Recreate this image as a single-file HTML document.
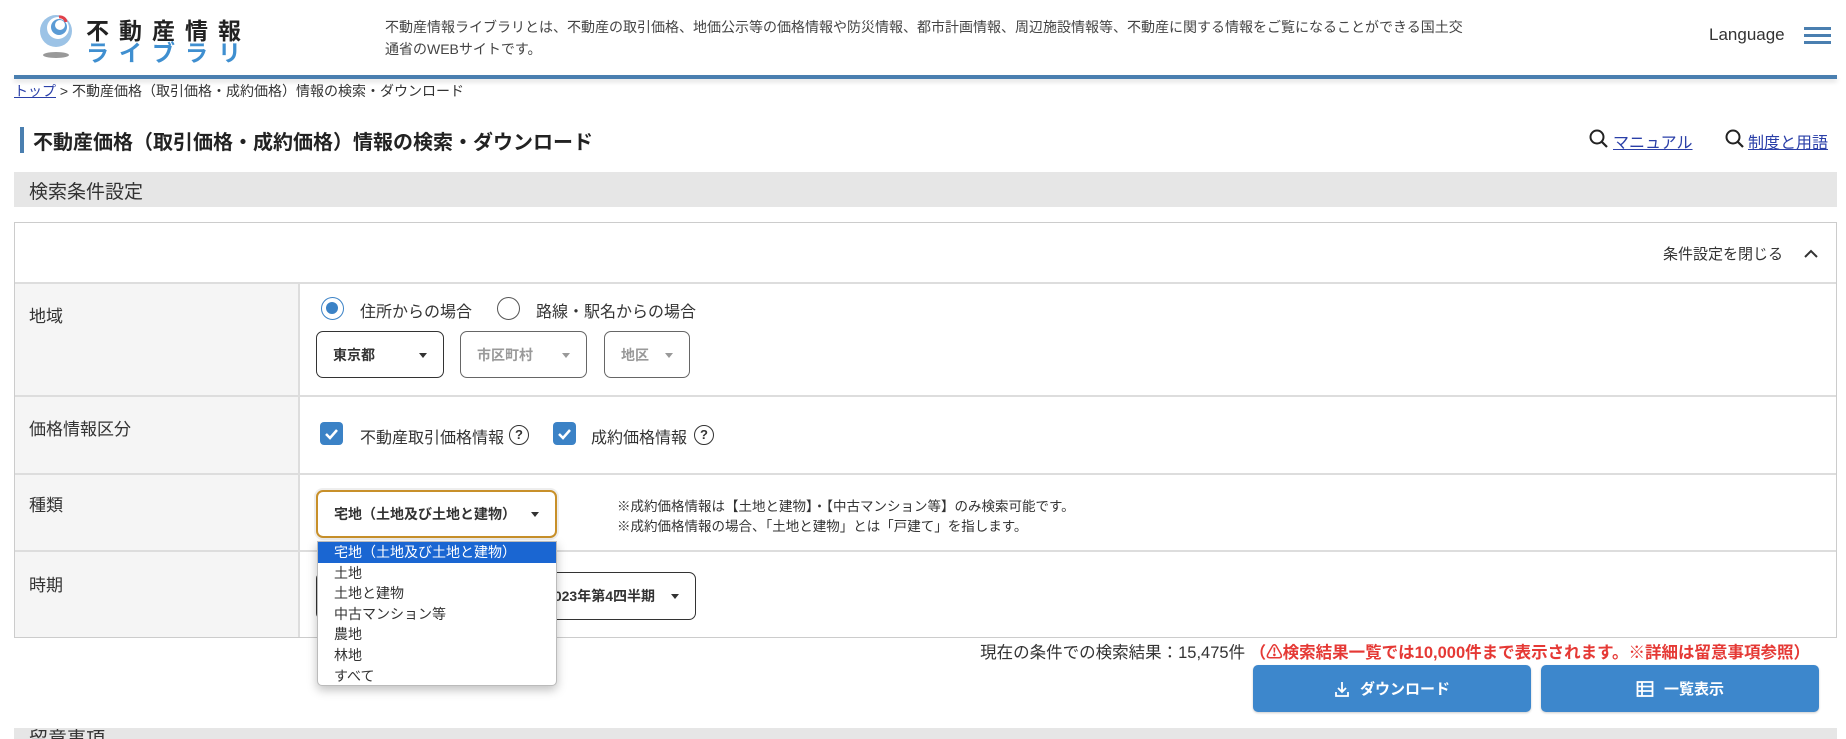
<!DOCTYPE html>
<html><head><meta charset="utf-8"><style>
*{margin:0;padding:0;box-sizing:border-box}
body{width:1846px;height:739px;overflow:hidden;background:#fff;font-family:"Liberation Sans","Noto Sans CJK JP",sans-serif;color:#333;position:relative}
.a{position:absolute;white-space:nowrap}
.sel{position:absolute;border:1px solid #333;border-radius:7px;background:#fff;font-size:14px;font-weight:bold;display:flex;align-items:center;padding-left:16px}
.sel .ar{position:absolute;right:16px;top:50%;margin-top:-2px;border-left:4px solid transparent;border-right:4px solid transparent;border-top:5px solid #333}
.dis{color:#999;border-color:#666}.dis .ar{border-top-color:#999}
.row{position:absolute;left:15px;width:1821px;border-top:2px solid #ddd}
.lab{position:absolute;left:15px;width:285px;background:#f5f5f5;border-right:2px solid #ddd}
.cb{position:absolute;width:23px;height:23px;border-radius:4px;background:#3b82c6}
.q{position:absolute;width:20px;height:20px;border:1.5px solid #333;border-radius:50%;font-size:13px;text-align:center;line-height:17px;font-weight:bold}
.btn{position:absolute;top:665px;height:47px;background:#3d87cc;border-radius:5px;color:#fff;font-size:15px;font-weight:bold;display:flex;align-items:center;justify-content:center;gap:10px;box-shadow:0 1px 2px rgba(0,0,0,.2)}
.dd div{height:20.6px;line-height:20.6px;padding-left:16px;font-size:14px}
</style></head><body>
<svg class="a" style="left:38px;top:13px" width="36" height="48" viewBox="0 0 36 48">
<circle cx="18" cy="18" r="16" fill="#9cc3e6"/><circle cx="20" cy="15" r="11" fill="#fff"/><circle cx="21" cy="14" r="8" fill="#5b9bd5"/><circle cx="22" cy="12" r="5" fill="#fff"/><path d="M21 4a6 6 0 0 1 7 5" stroke="#e0404a" stroke-width="3" fill="none"/>
<ellipse cx="18" cy="42" rx="13" ry="3" fill="#999"/></svg>
<div class="a" style="left:86px;top:12px;font-size:23px;font-weight:bold;letter-spacing:10px;color:#222">不動産情報</div>
<div class="a" style="left:86px;top:34px;font-size:23px;font-weight:bold;letter-spacing:10px;color:#3f8fd0">ライブラリ</div>
<div class="a" style="left:385px;top:16px;font-size:14px;line-height:22px;color:#444">不動産情報ライブラリとは、不動産の取引価格、地価公示等の価格情報や防災情報、都市計画情報、周辺施設情報等、不動産に関する情報をご覧になることができる国土交<br>通省のWEBサイトです。</div>
<div class="a" style="left:1709px;top:25px;font-size:17px;color:#333">Language</div>
<div class="a" style="left:1804px;top:27px;width:27px;height:3px;background:#4a7fb0;box-shadow:0 7px 0 #4a7fb0,0 14px 0 #4a7fb0"></div>
<div class="a" style="left:14px;top:75px;width:1823px;height:4px;background:#4a7fb0;box-shadow:0 3px 5px rgba(0,0,0,.12)"></div>
<div class="a" style="left:14px;top:81px;font-size:14px;color:#333"><span style="color:#2a3fa8;text-decoration:underline">トップ</span> &gt; 不動産価格（取引価格・成約価格）情報の検索・ダウンロード</div>
<div class="a" style="left:20px;top:127px;width:4px;height:26px;background:#4a7fb0"></div>
<div class="a" style="left:33px;top:126px;font-size:20px;font-weight:bold;color:#222">不動産価格（取引価格・成約価格）情報の検索・ダウンロード</div>
<svg class="a" style="left:1589px;top:129px" width="20" height="20"><circle cx="8" cy="8" r="6.5" stroke="#222" stroke-width="2" fill="none"/><path d="M13 13l5 5" stroke="#222" stroke-width="2.2"/></svg>
<div class="a" style="left:1613px;top:129px;font-size:16px;color:#2a3fa8;text-decoration:underline">マニュアル</div>
<svg class="a" style="left:1725px;top:129px" width="20" height="20"><circle cx="8" cy="8" r="6.5" stroke="#222" stroke-width="2" fill="none"/><path d="M13 13l5 5" stroke="#222" stroke-width="2.2"/></svg>
<div class="a" style="left:1748px;top:129px;font-size:16px;color:#2a3fa8;text-decoration:underline">制度と用語</div>
<div class="a" style="left:14px;top:172px;width:1823px;height:35px;background:#e6e6e6"></div>
<div class="a" style="left:29px;top:177px;font-size:19px;color:#333">検索条件設定</div>
<div class="a" style="left:14px;top:222px;width:1823px;height:416px;border:1px solid #ccc"></div>
<div class="a" style="left:1663px;top:243px;font-size:15px;color:#333">条件設定を閉じる</div>
<svg class="a" style="left:1803px;top:247px" width="16" height="12"><path d="M2 10l6-6 6 6" stroke="#333" stroke-width="2" fill="none"/></svg>
<div class="lab" style="top:284px;height:112px"></div>
<div class="lab" style="top:397px;height:77px"></div>
<div class="lab" style="top:475px;height:76px"></div>
<div class="lab" style="top:552px;height:85px"></div>
<div class="row" style="top:282px"></div><div class="row" style="top:395px"></div><div class="row" style="top:473px"></div><div class="row" style="top:550px"></div>
<div class="a" style="left:29px;top:302px;font-size:17px">地域</div>
<div class="a" style="left:29px;top:415px;font-size:17px">価格情報区分</div>
<div class="a" style="left:29px;top:491px;font-size:17px">種類</div>
<div class="a" style="left:29px;top:571px;font-size:17px">時期</div>
<div class="a" style="left:321px;top:297px;width:23px;height:23px;border:1.5px solid #3b82c6;border-radius:50%"><div style="margin:4px;width:12px;height:12px;border-radius:50%;background:#3b82c6"></div></div>
<div class="a" style="left:360px;top:298px;font-size:16px">住所からの場合</div>
<div class="a" style="left:497px;top:297px;width:23px;height:23px;border:1.5px solid #555;border-radius:50%"></div>
<div class="a" style="left:536px;top:298px;font-size:16px">路線・駅名からの場合</div>
<div class="sel" style="left:316px;top:331px;width:128px;height:47px">東京都<span class="ar"></span></div>
<div class="sel dis" style="left:460px;top:331px;width:127px;height:47px">市区町村<span class="ar"></span></div>
<div class="sel dis" style="left:604px;top:331px;width:86px;height:47px">地区<span class="ar"></span></div>
<div class="cb" style="left:320px;top:422px"><svg width="23" height="23"><path d="M6 12l4 4 7-8" stroke="#fff" stroke-width="2.5" fill="none"/></svg></div>
<div class="a" style="left:360px;top:424px;font-size:16px">不動産取引価格情報</div>
<div class="q" style="left:509px;top:424px;margin-top:1px">?</div>
<div class="cb" style="left:553px;top:422px"><svg width="23" height="23"><path d="M6 12l4 4 7-8" stroke="#fff" stroke-width="2.5" fill="none"/></svg></div>
<div class="a" style="left:591px;top:424px;font-size:16px">成約価格情報</div>
<div class="q" style="left:694px;top:424px;margin-top:1px">?</div>
<div class="sel" style="left:316px;top:572px;width:380px;height:48px;justify-content:flex-end;padding-right:40px">2023年第4四半期<span class="ar"></span></div>
<div class="sel" style="left:316px;top:490px;width:241px;height:48px;border:2px solid #c8902a;box-shadow:0 0 0 2px #eee">宅地（土地及び土地と建物）<span class="ar"></span></div>
<div class="a" style="left:617px;top:497px;font-size:13.5px;line-height:20px;color:#333">※成約価格情報は【土地と建物】・【中古マンション等】のみ検索可能です。<br>※成約価格情報の場合、「土地と建物」とは「戸建て」を指します。</div>
<div class="a dd" style="left:317px;top:541px;width:240px;height:145px;background:#fff;border:1px solid #bbb;border-radius:0 0 5px 5px;box-shadow:0 4px 10px rgba(0,0,0,.25)">
<div style="background:#1a66d2;color:#fff">宅地（土地及び土地と建物）</div><div>土地</div><div>土地と建物</div><div>中古マンション等</div><div>農地</div><div>林地</div><div>すべて</div></div>
<div class="a" style="right:36px;top:639px;font-size:16.5px;color:#333">現在の条件での検索結果：15,475件 <span style="color:#e53935;font-weight:bold">（⚠検索結果一覧では10,000件まで表示されます。※詳細は留意事項参照）</span></div>
<div class="btn" style="left:1253px;width:278px"><svg width="16" height="18"><path d="M8 2v10M4 8l4 4 4-4M2 12v4h12v-4" stroke="#fff" stroke-width="1.8" fill="none"/></svg>ダウンロード</div>
<div class="btn" style="left:1541px;width:278px"><svg width="18" height="18"><rect x="1.5" y="2" width="15" height="14" stroke="#fff" stroke-width="1.8" fill="none"/><path d="M1.5 6.5h15M1.5 11h15M6 2v14" stroke="#fff" stroke-width="1.8"/></svg>一覧表示</div>
<div class="a" style="left:14px;top:728px;width:1823px;height:11px;background:#e6e6e6;overflow:hidden"><span style="position:absolute;left:15px;top:-4px;font-size:19px">留意事項</span></div>
</body></html>
